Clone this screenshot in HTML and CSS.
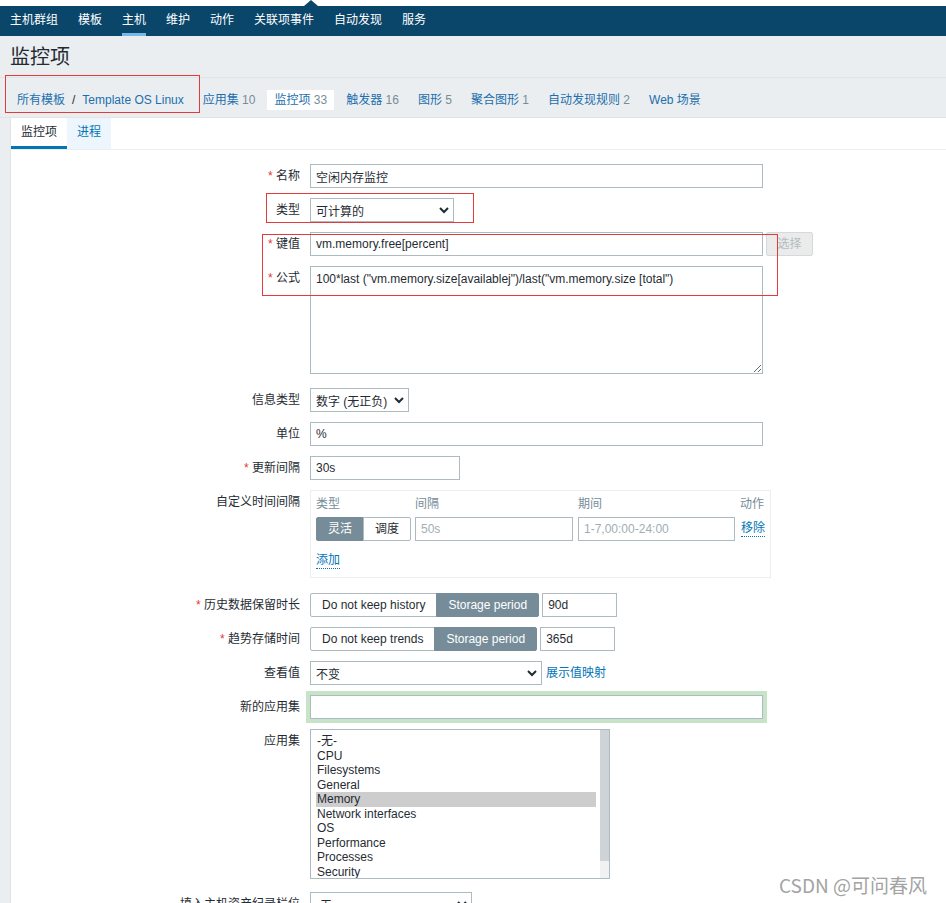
FILE: index.html
```html
<!DOCTYPE html>
<html>
	<head>
		<meta charset="UTF-8">
		<title>监控项</title>
		<link rel="stylesheet" href="styles.css">
	</head>
	<body>
		<div class="topgap"><span class="pointer"></span></div>
		<div class="topnav">
			<a href="#">主机群组</a>
			<a href="#">模板</a>
			<a href="#" class="active">主机</a>
			<a href="#">维护</a>
			<a href="#">动作</a>
			<a href="#">关联项事件</a>
			<a href="#">自动发现</a>
			<a href="#">服务</a>
		</div>

		<h1 class="title">监控项</h1>

		<ul class="crumbs">
			<li><a href="#">所有模板</a><span class="sep">/</span><a href="#">Template OS Linux</a></li>
			<li><a href="#">应用集</a> <span class="count">10</span></li>
			<li class="current"><a href="#">监控项</a> <span class="count">33</span></li>
			<li><a href="#">触发器</a> <span class="count">16</span></li>
			<li><a href="#">图形</a> <span class="count">5</span></li>
			<li><a href="#">聚合图形</a> <span class="count">1</span></li>
			<li><a href="#">自动发现规则</a> <span class="count">2</span></li>
			<li><a href="#">Web 场景</a></li>
		</ul>

		<div class="panel">
			<ul class="tabs">
				<li class="active"><a href="#">监控项</a></li>
				<li class="shaded"><a href="#">进程</a></li>
			</ul>

			<div class="form">
				<div class="row">
					<div class="label"><span class="req">*</span> 名称</div>
					<div class="field"><input class="input wide" type="text" value="空闲内存监控"></div>
				</div>
				<div class="row">
					<div class="label">类型</div>
					<div class="field">
						<div class="select sel-type"><span>可计算的</span><svg width="10" height="7" viewBox="0 0 10 7"><polyline points="1,1 5,5 9,1"/></svg></div>
					</div>
				</div>
				<div class="row">
					<div class="label"><span class="req">*</span> 键值</div>
					<div class="field">
						<input class="input wide" type="text" value="vm.memory.free[percent]">
						<span class="btn-off">选择</span>
					</div>
				</div>
				<div class="row">
					<div class="label"><span class="req">*</span> 公式</div>
					<div class="field"><textarea class="formula">100*last ("vm.memory.size[availablej")/last("vm.memory.size [total")</textarea></div>
				</div>
				<div class="row">
					<div class="label">信息类型</div>
					<div class="field">
						<div class="select sel-info"><span>数字 (无正负)</span><svg width="10" height="7" viewBox="0 0 10 7"><polyline points="1,1 5,5 9,1"/></svg></div>
					</div>
				</div>
				<div class="row">
					<div class="label">单位</div>
					<div class="field"><input class="input wide" type="text" value="%"></div>
				</div>
				<div class="row">
					<div class="label"><span class="req">*</span> 更新间隔</div>
					<div class="field"><input class="input small" type="text" value="30s"></div>
				</div>
				<div class="row">
					<div class="label">自定义时间间隔</div>
					<div class="field">
						<div class="intervals">
							<div class="iv-grid">
								<div class="iv-head">类型</div>
								<div class="iv-head">间隔</div>
								<div class="iv-head">期间</div>
								<div class="iv-head">动作</div>
								<div class="toggle">
									<span class="on">灵活</span><span>调度</span>
								</div>
								<input class="input" type="text" placeholder="50s">
								<input class="input" type="text" placeholder="1-7,00:00-24:00">
								<a href="#" class="link-dotted remove">移除</a>
							</div>
							<a href="#" class="link-dotted add">添加</a>
						</div>
					</div>
				</div>
				<div class="row">
					<div class="label"><span class="req">*</span> 历史数据保留时长</div>
					<div class="field">
						<div class="toggle">
							<span>Do not keep history</span><span class="on">Storage period</span>
						</div>
						<input class="input tiny" type="text" value="90d">
					</div>
				</div>
				<div class="row">
					<div class="label"><span class="req">*</span> 趋势存储时间</div>
					<div class="field">
						<div class="toggle">
							<span>Do not keep trends</span><span class="on">Storage period</span>
						</div>
						<input class="input tiny" type="text" value="365d">
					</div>
				</div>
				<div class="row">
					<div class="label">查看值</div>
					<div class="field">
						<div class="select sel-map"><span>不变</span><svg width="10" height="7" viewBox="0 0 10 7"><polyline points="1,1 5,5 9,1"/></svg></div>
						<a href="#" class="maplink">展示值映射</a>
					</div>
				</div>
				<div class="row">
					<div class="label">新的应用集</div>
					<div class="field"><input class="input wide glow" type="text" value=""></div>
				</div>
				<div class="row">
					<div class="label">应用集</div>
					<div class="field">
						<div class="applist">
							<ul class="app-items">
								<li>-无-</li>
								<li>CPU</li>
								<li>Filesystems</li>
								<li>General</li>
								<li class="picked">Memory</li>
								<li>Network interfaces</li>
								<li>OS</li>
								<li>Performance</li>
								<li>Processes</li>
								<li>Security</li>
							</ul>
							<div class="scrollbar"><div class="thumb"></div></div>
						</div>
					</div>
				</div>
				<div class="row">
					<div class="label">填入主机资产纪录栏位</div>
					<div class="field">
						<div class="select sel-inv"><span>-无-</span><svg width="10" height="7" viewBox="0 0 10 7"><polyline points="1,1 5,5 9,1"/></svg></div>
					</div>
				</div>
				<div class="row">
					<div class="label">描述</div>
					<div class="field"><textarea class="formula"></textarea></div>
				</div>
			</div>
		</div>

		<div class="mark mark-crumb"></div>
		<div class="mark mark-type"></div>
		<div class="mark mark-key"></div>
		<div class="watermark">CSDN @可问春风</div>
	</body>
</html>
```

FILE: styles.css
```css
body{
	margin: 0;
	background: #ebeef0;
	font-family: "Liberation Sans", "Noto Sans CJK SC", sans-serif;
	font-size: 12px;
	color: #1f2c33;
}
a{
	color: #1b6fae;
	text-decoration: none;
}

/* top bar */
.topgap{
	position: relative;
	height: 6px;
	background: #fff;
}
.pointer{
	position: absolute;
	left: 304px;
	top: 0;
	border-left: 7px solid transparent;
	border-right: 7px solid transparent;
	border-bottom: 6px solid #0a466a;
}
.topnav{
	display: flex;
	height: 30px;
	background: #0a466a;
}
.topnav a{
	margin: 0 10px;
	padding-top: 2px;
	line-height: 25px;
	color: #fff;
	border-bottom: 3px solid transparent;
}
.topnav a.active{
	border-bottom-color: #76b9e8;
}

/* header */
.title{
	margin: 0;
	padding: 9px 10px 8px;
	font-size: 20px;
	font-weight: normal;
	line-height: 24px;
	border-bottom: 1px solid #dfe4e7;
}
.crumbs{
	display: flex;
	gap: 5px;
	margin: 0;
	padding: 12px 10px 7px;
	list-style: none;
	border-bottom: 1px solid #dfe4e7;
}
.crumbs li{
	padding: 0 7px;
	line-height: 20px;
}
.crumbs .current{
	background: #fff;
}
.crumbs .sep{
	margin: 0 7px;
	color: #1f2c33;
}
.count{
	color: #768d99;
}

/* panel */
.panel{
	margin-left: 10px;
	border-left: 1px solid #dfe4e7;
	background: #fff;
	padding-bottom: 40px;
}
.tabs{
	display: flex;
	margin: 0;
	padding: 0;
	list-style: none;
	border-bottom: 1px solid #ebeef0;
}
.tabs a{
	display: block;
	padding: 0 10px;
	line-height: 28px;
	border-bottom: 3px solid transparent;
	color: #0275b8;
}
.tabs .active a{
	color: #1f2c33;
	border-bottom-color: #0275b8;
}
.tabs .shaded a{
	background: #eef6fd;
}

/* form */
.form{
	padding-top: 9px;
}
.row{
	display: flex;
	padding: 5px 0;
}
.label{
	flex: none;
	width: 289px;
	margin-right: 10px;
	text-align: right;
	line-height: 24px;
}
.req{
	color: #e33734;
}
.field{
	display: flex;
	align-items: flex-start;
}
.input{
	height: 24px;
	box-sizing: border-box;
	border: 1px solid #acbbc2;
	padding: 0 5px;
	font: inherit;
	color: #1f2c33;
	background: #fff;
	outline: none;
}
.input::placeholder{
	color: #a0aeb6;
}
.wide{
	width: 453px;
}
.small{
	width: 150px;
}
.tiny{
	width: 75px;
	margin-left: 3px;
}
.glow{
	box-shadow: 0 0 0 4px #c8e4c8;
}
.formula{
	display: block;
	width: 453px;
	height: 108px;
	box-sizing: border-box;
	margin: 0 0 4px;
	padding: 5px;
	border: 1px solid #acbbc2;
	font: inherit;
	line-height: 14px;
	color: #1f2c33;
	resize: vertical;
}
.btn-off{
	margin-left: 3px;
	width: 47px;
	height: 24px;
	box-sizing: border-box;
	line-height: 22px;
	text-align: center;
	border: 1px solid #d3d9dc;
	border-radius: 2px;
	background: #ebebeb;
	color: #b3bcc1;
}

.select{
	display: flex;
	align-items: center;
	justify-content: space-between;
	height: 24px;
	box-sizing: border-box;
	padding: 0 4px 0 5px;
	border: 1px solid #acbbc2;
	background: #fff;
}
.select svg{
	fill: none;
	stroke: #1f2c33;
	stroke-width: 2;
}
.sel-type{
	width: 144px;
}
.sel-info{
	width: 99px;
}
.sel-map{
	width: 232px;
}
.sel-inv{
	width: 162px;
}
.maplink{
	margin-left: 4px;
	line-height: 24px;
	color: #0275b8;
}

/* toggles */
.toggle{
	display: flex;
}
.toggle span{
	height: 24px;
	box-sizing: border-box;
	padding: 0 11px;
	line-height: 22px;
	border: 1px solid #acbbc2;
	background: #fff;
	white-space: nowrap;
}
.toggle span + span{
	margin-left: -1px;
}
.toggle span:first-child{
	border-radius: 2px 0 0 2px;
}
.toggle span:last-child{
	border-radius: 0 2px 2px 0;
}
.toggle .on{
	background: #768d99;
	border-color: #768d99;
	color: #fff;
}

/* custom intervals */
.intervals{
	width: 461px;
	box-sizing: border-box;
	margin-bottom: 5px;
	padding: 4px 5px 8px;
	border: 1px solid #ebeef0;
}
.iv-grid{
	display: grid;
	grid-template-columns: 94px 158px 157px auto;
	column-gap: 5px;
	row-gap: 4px;
}
.iv-head{
	line-height: 18px;
	color: #768d99;
	white-space: nowrap;
}
.iv-grid .input{
	width: 100%;
}
.link-dotted{
	color: #0275b8;
	border-bottom: 1px dotted #0275b8;
	align-self: center;
	justify-self: start;
	line-height: 15px;
	white-space: nowrap;
}
.remove{
	margin-left: 1px;
}
.add{
	display: inline-block;
	margin-top: 12px;
}

/* application list */
.applist{
	display: flex;
	width: 300px;
	height: 150px;
	box-sizing: border-box;
	margin-bottom: 3px;
	border: 1px solid #acbbc2;
	overflow: hidden;
}
.app-items{
	flex: 1;
	margin: 0;
	padding: 4px 4px 0 5px;
	list-style: none;
}
.app-items li{
	padding-left: 1px;
	line-height: 14.5px;
	white-space: nowrap;
}
.app-items .picked{
	background: #cdcdcd;
}
.scrollbar{
	width: 9px;
	background: #f1f1f1;
}
.thumb{
	height: 131px;
	background: #cdd3d7;
}

/* annotation boxes drawn over the page */
.mark{
	position: absolute;
	border: 1px solid #e23b3b;
	pointer-events: none;
}
.mark-crumb{
	left: 5px;
	top: 75px;
	width: 193px;
	height: 36px;
}
.mark-type{
	left: 266px;
	top: 193px;
	width: 206px;
	height: 28px;
}
.mark-key{
	left: 262px;
	top: 234px;
	width: 514px;
	height: 60px;
}
.watermark{
	position: absolute;
	left: 779px;
	top: 874px;
	font-family: "Noto Sans CJK SC", "Noto Sans", sans-serif;
	font-size: 19px;
	line-height: 22px;
	color: #a3a3a3;
	text-shadow: 0 0 2px #fff;
}
```
